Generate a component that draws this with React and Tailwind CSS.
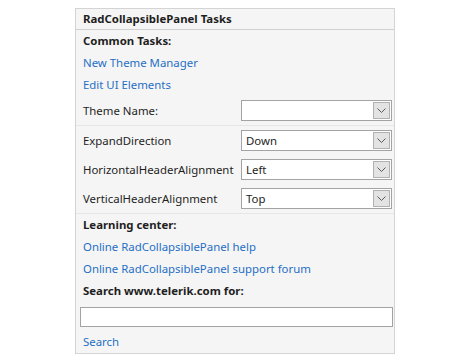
import React from 'react';

const Chevron = () => (
    <svg width="9" height="5" viewBox="0 0 9 5" fill="none">
        <path d="M0.5 0.5 L4.5 4.5 L8.5 0.5" stroke="#5a5a5a" strokeWidth="1" />
    </svg>
);

const Dropdown = ({ value }) => (
    <div className="w-[151px] h-[21px] bg-white border border-[#a3a3a3] flex items-center">
        <span className="flex-grow pl-[4px] text-[#1e1e1e]">{value}</span>
        <div className="w-[17px] h-[17px] mr-[1px] bg-[#e3e3e3] border border-[#b1b1b1] flex items-center justify-center">
            <Chevron />
        </div>
    </div>
);

const PropRow = ({ label, value, last }) => (
    <div className={`flex items-center pl-[7px] pr-[2px] ${last ? 'h-[30px] border-b border-[#e6e6e6]' : 'h-[29px]'}`}>
        <span className="w-[158px] text-[#1e1e1e]">{label}</span>
        <Dropdown value={value} />
    </div>
);

const LinkRow = ({ children }) => (
    <div className="h-[22px] flex items-center px-[7px] text-[#1f6fc6]">{children}</div>
);

const TitleRow = ({ children }) => (
    <div className="h-[22px] flex items-center px-[7px] font-bold text-[#1e1e1e]">{children}</div>
);

export default function App() {
    return (
        <div className="w-[470px] h-[363px] bg-white pt-[8px]" style={{ fontFamily: '"Noto Sans", sans-serif' }}>
            <div className="mx-auto w-[320px] border border-[#d4d4d4] bg-[#f5f5f5] text-[11.4px] leading-none">
                <div className="h-[21px] flex items-center px-[7px] font-bold text-[#1e1e1e] border-b border-[#d0d0d0]">
                    RadCollapsiblePanel Tasks
                </div>
                <TitleRow>Common Tasks:</TitleRow>
                <LinkRow>New Theme Manager</LinkRow>
                <LinkRow>Edit UI Elements</LinkRow>
                <div className="h-[30px] flex items-center pl-[7px] pr-[2px] border-b border-[#e6e6e6]">
                    <span className="w-[158px] text-[#1e1e1e]">Theme Name:</span>
                    <Dropdown value="" />
                </div>
                <PropRow label="ExpandDirection" value="Down" />
                <PropRow label="HorizontalHeaderAlignment" value="Left" />
                <PropRow label="VerticalHeaderAlignment" value="Top" last />
                <TitleRow>Learning center:</TitleRow>
                <LinkRow>Online RadCollapsiblePanel help</LinkRow>
                <LinkRow>Online RadCollapsiblePanel support forum</LinkRow>
                <TitleRow>Search www.telerik.com for:</TitleRow>
                <div className="pt-[5px] pb-[4px] pl-[4px] pr-[1px]">
                    <div className="h-[20px] bg-white border border-[#a3a3a3]"></div>
                </div>
                <LinkRow>Search</LinkRow>
            </div>
        </div>
    );
}
